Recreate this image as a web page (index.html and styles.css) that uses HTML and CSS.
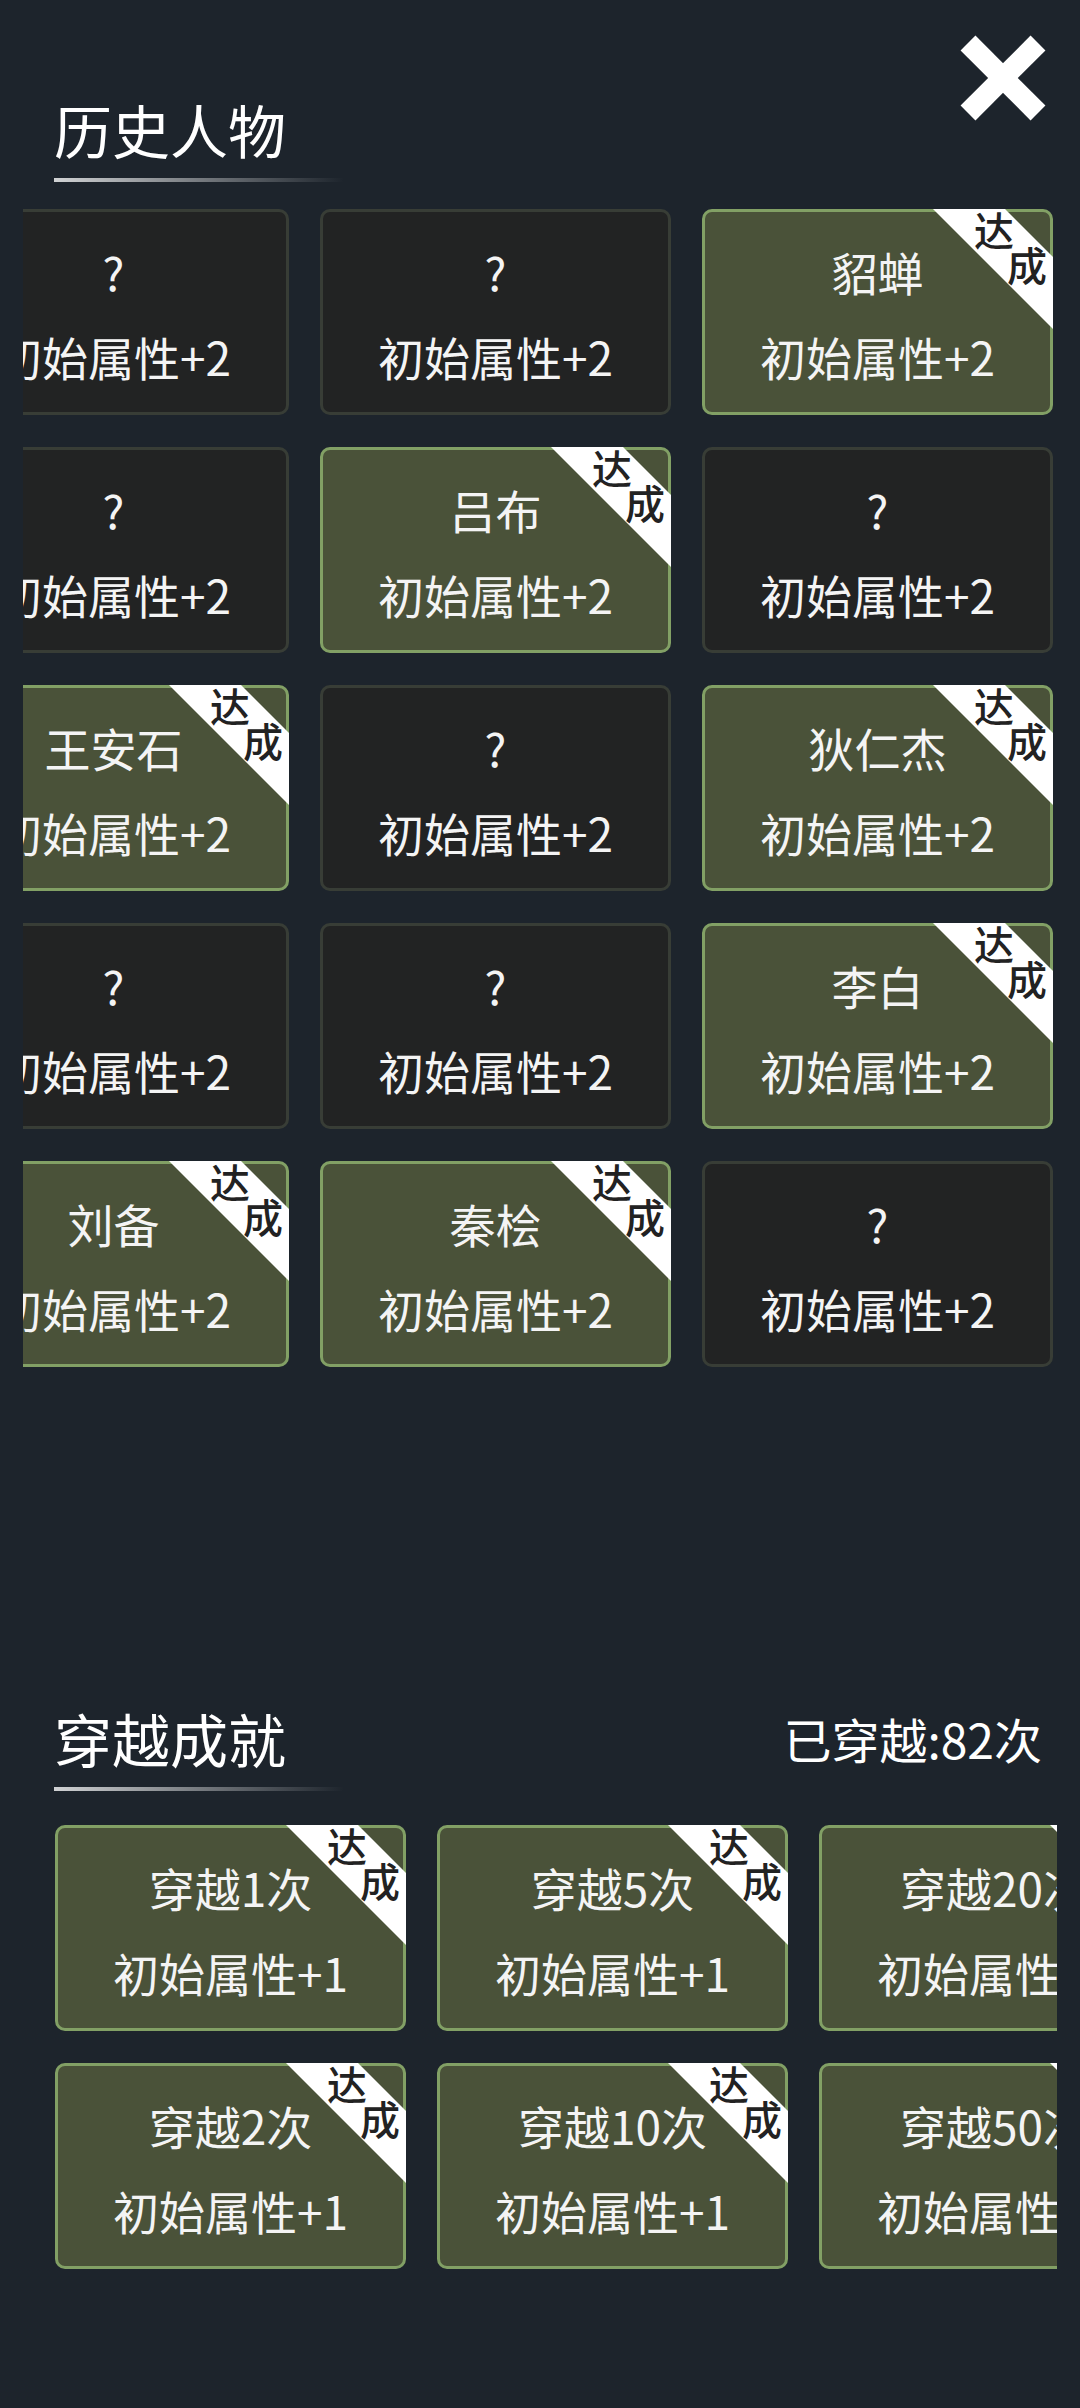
FILE: index.html
```html
<!DOCTYPE html>
<html lang="zh-CN">
  <head>
    <meta charset="UTF-8" />
    <title>历史人物</title>
    <link rel="stylesheet" href="styles.css">
  </head>
  <body>
    <button class="close-btn" type="button" aria-label="关闭">
      <svg viewBox="0 0 86 86" width="86" height="86">
        <line x1="8" y1="8" x2="78" y2="78" />
        <line x1="78" y1="8" x2="8" y2="78" />
      </svg>
    </button>

    <div class="panel">
      <div class="section-head">
        <div class="title-wrap">
          <h2>历史人物</h2>
          <div class="title-line"></div>
        </div>
      </div>

      <div class="grid grid-people">
        <div class="card"><div class="name">?</div><div class="attr">初始属性+2</div></div>
        <div class="card"><div class="name">?</div><div class="attr">初始属性+2</div></div>
        <div class="card done"><div class="name">貂蝉</div><div class="attr">初始属性+2</div><div class="badge"><span class="b1">达</span><span class="b2">成</span></div></div>

        <div class="card"><div class="name">?</div><div class="attr">初始属性+2</div></div>
        <div class="card done"><div class="name">吕布</div><div class="attr">初始属性+2</div><div class="badge"><span class="b1">达</span><span class="b2">成</span></div></div>
        <div class="card"><div class="name">?</div><div class="attr">初始属性+2</div></div>

        <div class="card done"><div class="name">王安石</div><div class="attr">初始属性+2</div><div class="badge"><span class="b1">达</span><span class="b2">成</span></div></div>
        <div class="card"><div class="name">?</div><div class="attr">初始属性+2</div></div>
        <div class="card done"><div class="name">狄仁杰</div><div class="attr">初始属性+2</div><div class="badge"><span class="b1">达</span><span class="b2">成</span></div></div>

        <div class="card"><div class="name">?</div><div class="attr">初始属性+2</div></div>
        <div class="card"><div class="name">?</div><div class="attr">初始属性+2</div></div>
        <div class="card done"><div class="name">李白</div><div class="attr">初始属性+2</div><div class="badge"><span class="b1">达</span><span class="b2">成</span></div></div>

        <div class="card done"><div class="name">刘备</div><div class="attr">初始属性+2</div><div class="badge"><span class="b1">达</span><span class="b2">成</span></div></div>
        <div class="card done"><div class="name">秦桧</div><div class="attr">初始属性+2</div><div class="badge"><span class="b1">达</span><span class="b2">成</span></div></div>
        <div class="card"><div class="name">?</div><div class="attr">初始属性+2</div></div>
      </div>

      <div class="section-head section-two">
        <div class="title-wrap">
          <h2>穿越成就</h2>
          <div class="title-line"></div>
        </div>
        <span class="stat">已穿越:82次</span>
      </div>

      <div class="grid grid-travel">
        <div class="card done"><div class="name">穿越1次</div><div class="attr">初始属性+1</div><div class="badge"><span class="b1">达</span><span class="b2">成</span></div></div>
        <div class="card done"><div class="name">穿越5次</div><div class="attr">初始属性+1</div><div class="badge"><span class="b1">达</span><span class="b2">成</span></div></div>
        <div class="card done"><div class="name">穿越20次</div><div class="attr">初始属性+1</div><div class="badge"><span class="b1">达</span><span class="b2">成</span></div></div>

        <div class="card done"><div class="name">穿越2次</div><div class="attr">初始属性+1</div><div class="badge"><span class="b1">达</span><span class="b2">成</span></div></div>
        <div class="card done"><div class="name">穿越10次</div><div class="attr">初始属性+1</div><div class="badge"><span class="b1">达</span><span class="b2">成</span></div></div>
        <div class="card done"><div class="name">穿越50次</div><div class="attr">初始属性+1</div><div class="badge"><span class="b1">达</span><span class="b2">成</span></div></div>
      </div>
    </div>
  </body>
</html>
```

FILE: styles.css
```css
html,
body {
  background: #1d242c;
}
body {
  margin: 0;
  min-height: 2408px;
  position: relative;
  font-family: "Noto Sans CJK SC", "Noto Sans", sans-serif;
  color: #f4f4f4;
}
.close-btn {
  position: absolute;
  top: 35px;
  right: 34px;
  width: 86px;
  height: 86px;
  padding: 0;
  border: none;
  background: none;
  cursor: pointer;
}
.close-btn svg {
  display: block;
}
.close-btn line {
  stroke: #ffffff;
  stroke-width: 21;
}
.panel {
  margin: 0 23px;
  padding-top: 100px;
  overflow: hidden;
}
.section-head {
  display: flex;
  justify-content: space-between;
  align-items: flex-start;
  padding: 0 15px 0 31px;
}
.section-head h2 {
  margin: 0;
  font-size: 58px;
  line-height: 1;
  font-weight: 400;
  color: #ffffff;
}
.title-line {
  width: 290px;
  height: 4px;
  margin-top: 20px;
  background: linear-gradient(to right, #d0d2d4, rgba(208, 210, 212, 0.4) 60%, rgba(208, 210, 212, 0));
}
.stat {
  margin-top: 5px;
  font-size: 48px;
  line-height: 1;
  color: #ffffff;
}
.grid {
  display: grid;
  grid-template-columns: repeat(3, 351px);
  grid-auto-rows: 206px;
  column-gap: 31px;
  row-gap: 32px;
}
.grid-people {
  margin-top: 27px;
  margin-left: -85px;
}
.section-two {
  margin-top: 342px;
}
.grid-travel {
  margin-top: 34px;
  margin-left: 32px;
}
.card {
  position: relative;
  box-sizing: border-box;
  display: flex;
  flex-direction: column;
  align-items: center;
  gap: 39px;
  padding-top: 36px;
  background: #222323;
  border: 3px solid #383d36;
  border-radius: 10px;
  white-space: nowrap;
}
.card.done {
  background: #4a5239;
  border-color: #82a065;
}
.name,
.attr {
  font-size: 46px;
  line-height: 1;
}
.badge {
  position: absolute;
  top: -3px;
  right: -3px;
  width: 120px;
  height: 120px;
}
.badge::before {
  content: "";
  position: absolute;
  inset: 0;
  background: #ffffff;
  clip-path: polygon(0 0, 72px 0, 120px 48px, 120px 120px);
}
.badge span {
  position: absolute;
  font-size: 40px;
  line-height: 1;
  font-weight: 500;
  color: #222222;
}
.badge .b1 {
  left: 41px;
  top: 0;
}
.badge .b2 {
  left: 74px;
  top: 35px;
}
```
